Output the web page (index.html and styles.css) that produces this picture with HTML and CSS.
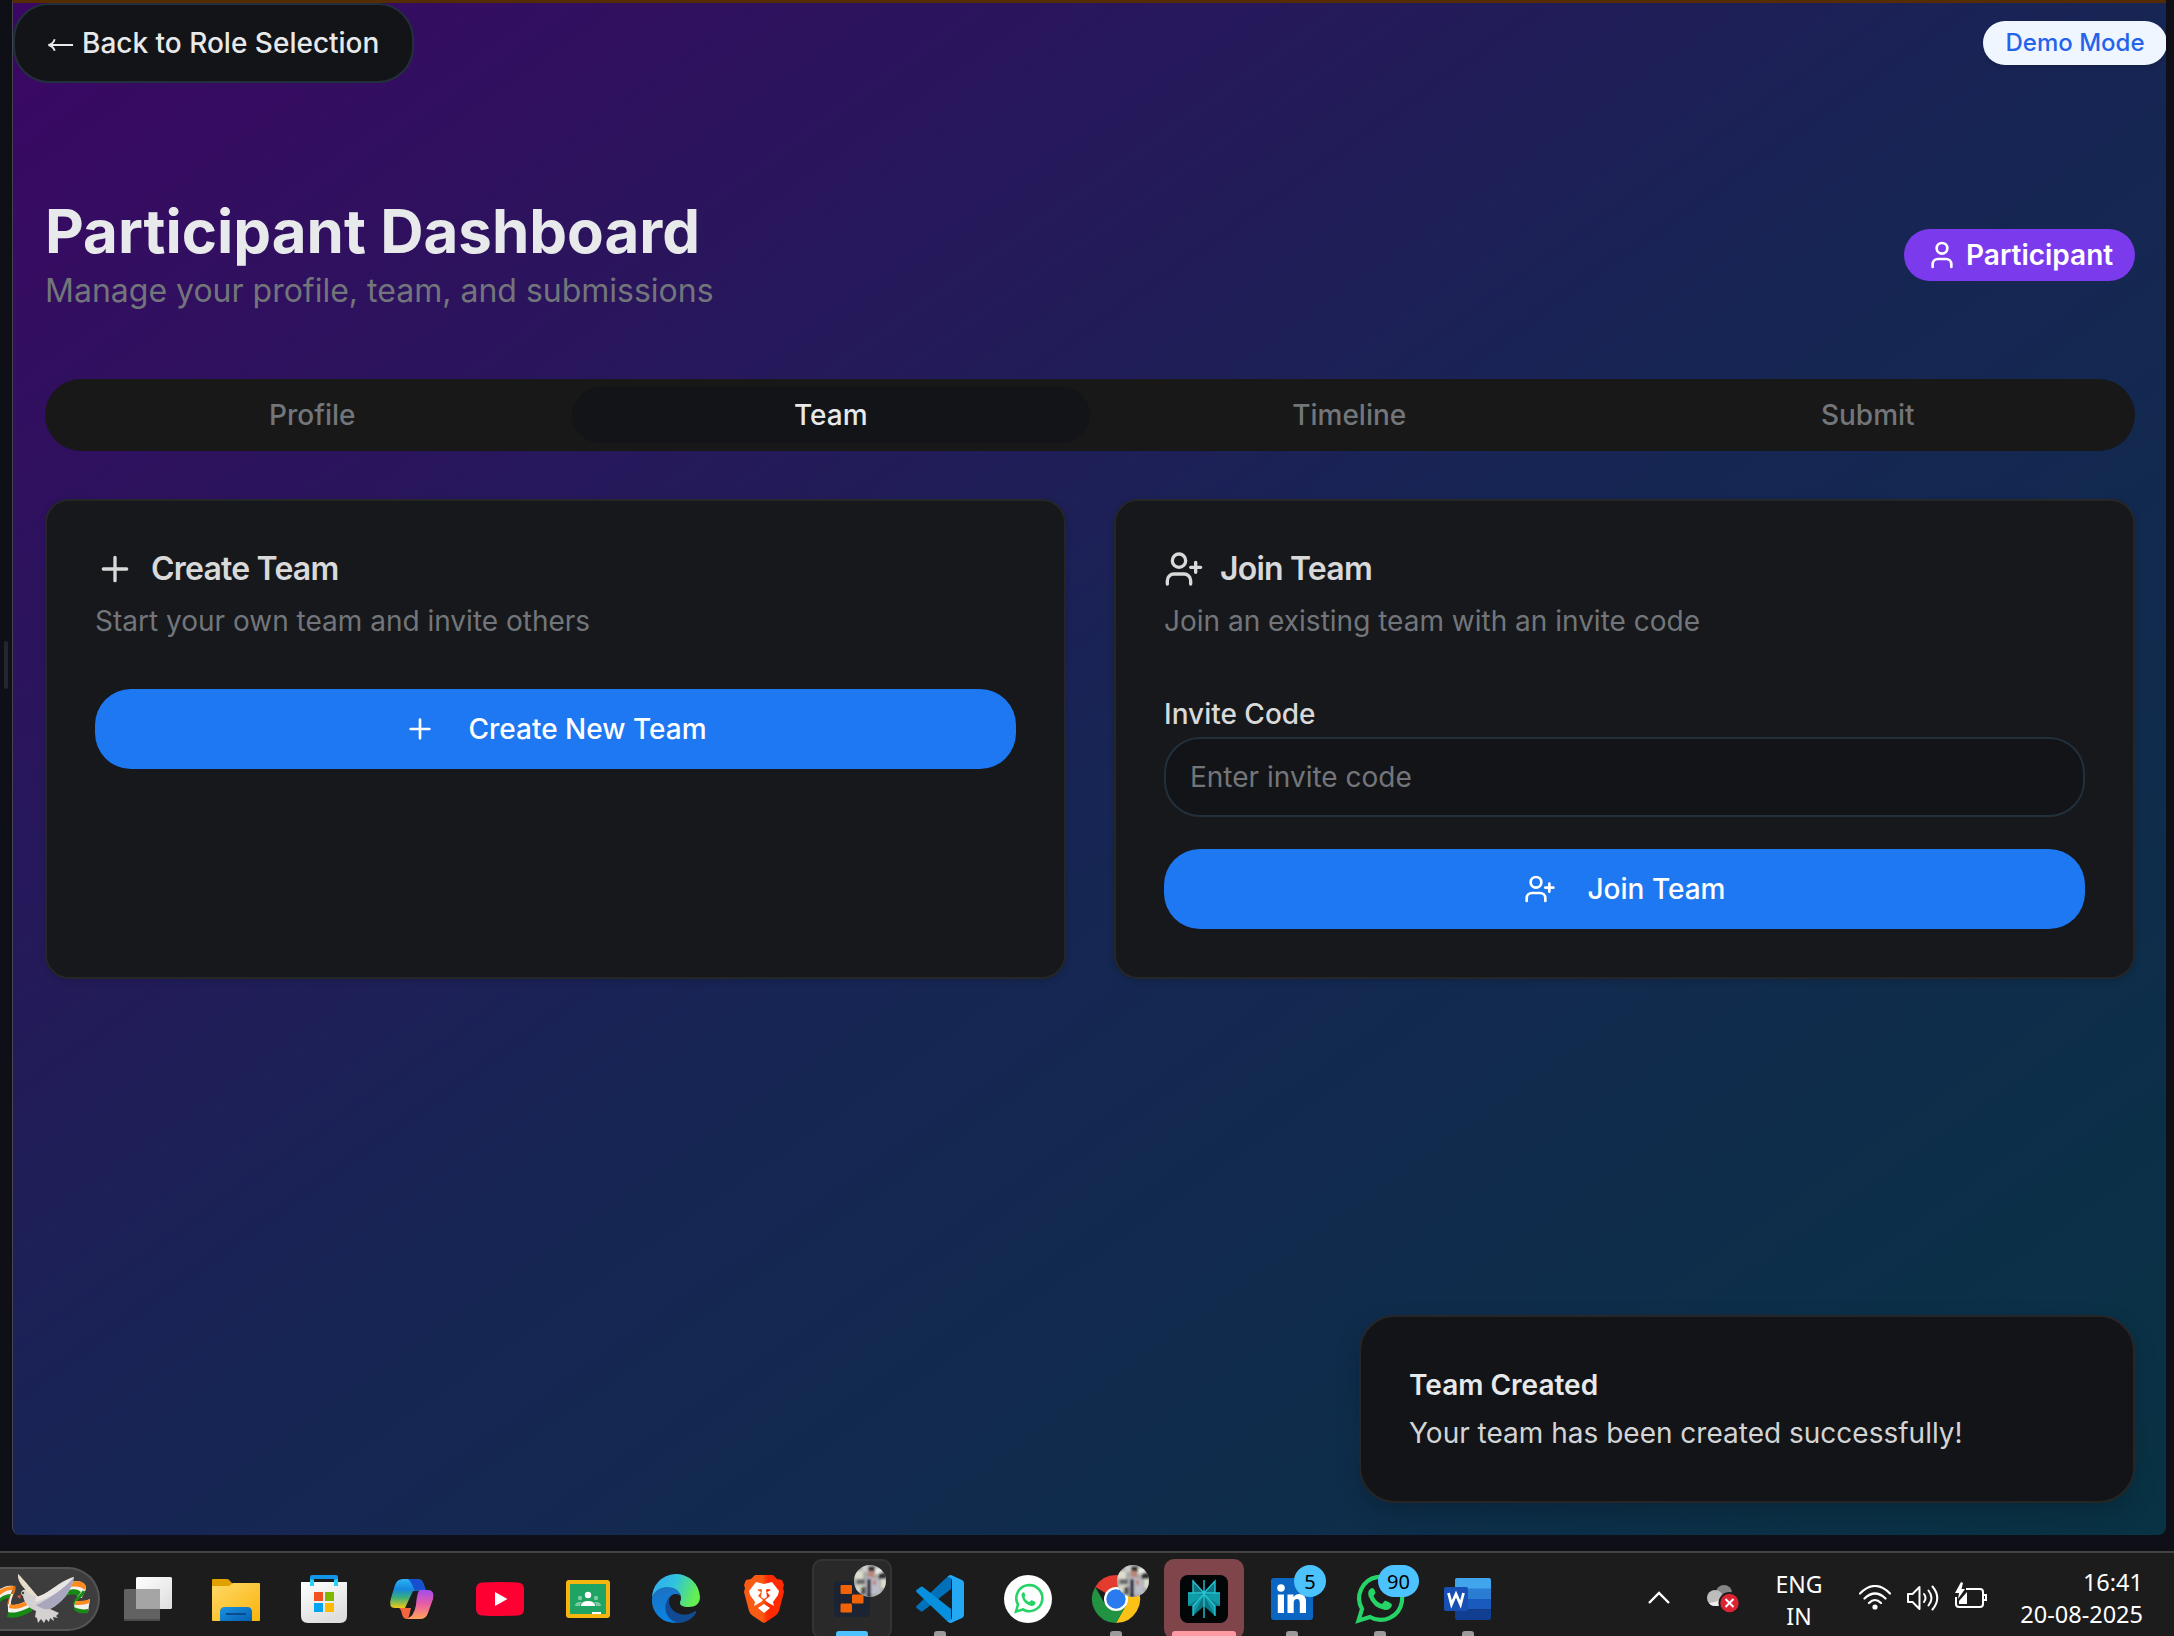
FILE: index.html
```html
<!DOCTYPE html>
<html lang="en">
<head>
<meta charset="utf-8">
<title>Participant Dashboard</title>
<link rel="stylesheet" href="styles.css">
</head>
<body>
<svg class="defs" width="0" height="0" aria-hidden="true">
  <defs>
    <symbol id="user-plus" viewBox="0 0 24 24"><path d="M16 21v-2a4 4 0 0 0-4-4H6a4 4 0 0 0-4 4v2"/><circle cx="9" cy="7" r="4"/><path d="M19 8v6M22 11h-6"/></symbol>
    <symbol id="plus" viewBox="0 0 24 24"><path d="M5 12h14M12 5v14"/></symbol>
    <symbol id="user" viewBox="0 0 24 24"><path d="M19 21v-2a4 4 0 0 0-4-4H9a4 4 0 0 0-4 4v2"/><circle cx="12" cy="7" r="4"/></symbol>
    <clipPath id="round"><circle cx="16" cy="16" r="16"/></clipPath>
    <filter id="soft"><feGaussianBlur stdDeviation="0.9"/></filter>
    <symbol id="avatar" viewBox="0 0 32 32">
      <g clip-path="url(#round)">
        <rect width="32" height="32" fill="#a9aaa5"/>
        <g filter="url(#soft)">
          <path d="M0 6h9v8H0z" fill="#dddccf"/><path d="M3 14h8v5H3z" fill="#6a6c6c"/><path d="M1 20h9v7H1z" fill="#d6d5c5"/>
          <path d="M8 0h6v7H8z" fill="#ccc"/><path d="M14 2h7v5h-7z" fill="#332b2c"/><path d="M14 6h6v7h-6z" fill="#b98678"/>
          <path d="M21 3h7v6h-7z" fill="#e8e8e4"/><path d="M25 8h7v6h-7z" fill="#2f3036"/><path d="M27 14h5v9h-5z" fill="#dcdccf"/>
          <path d="M11 13l6-1 8 3 2 14H12z" fill="#bcbcc9"/><path d="M13 14h4v18h-4z" fill="#2c2e3c"/><path d="M19 15h3v5h-3z" fill="#bf8377"/><path d="M7 22h5v7H7z" fill="#555"/>
        </g>
      </g>
    </symbol>
  </defs>
</svg>

<div class="screen">
  <div class="viewport">
    <div class="grip"></div>
    <main class="app">
      <button class="back"><svg class="arrow" viewBox="0 0 28 16"><path d="M27 8H2M8 2C7 5 4 7.500 1.500 8 4 8.500 7 11 8 14"/></svg><span class="back-text">Back to Role Selection</span></button>
      <span class="demo">Demo Mode</span>

      <header class="head">
        <div>
          <h1 class="title">Participant Dashboard</h1>
          <p class="subtitle">Manage your profile, team, and submissions</p>
        </div>
        <span class="role"><svg class="icon icon-md"><use href="#user"/></svg><span class="role-text">Participant</span></span>
      </header>

      <nav class="tabs">
        <span class="tab">Profile</span>
        <span class="tab active">Team</span>
        <span class="tab">Timeline</span>
        <span class="tab">Submit</span>
      </nav>

      <section class="cards">
        <article class="card">
          <h2 class="card-title"><svg class="icon icon-lg"><use href="#plus"/></svg><span class="card-name">Create Team</span></h2>
          <p class="card-desc">Start your own team and invite others</p>
          <button class="primary"><svg class="icon icon-md"><use href="#plus"/></svg><span>Create New Team</span></button>
        </article>
        <article class="card">
          <h2 class="card-title"><svg class="icon icon-lg"><use href="#user-plus"/></svg><span class="card-name">Join Team</span></h2>
          <p class="card-desc">Join an existing team with an invite code</p>
          <label class="label" for="code">Invite Code</label>
          <input class="input" id="code" type="text" placeholder="Enter invite code">
          <button class="primary"><svg class="icon icon-md"><use href="#user-plus"/></svg><span>Join Team</span></button>
        </article>
      </section>

      <aside class="toast">
        <p class="toast-title">Team Created</p>
        <p class="toast-text">Your team has been created successfully!</p>
      </aside>
    </main>
  </div>

  <footer class="taskbar">
    <div class="search">
      <svg class="dove" width="100" height="64" viewBox="0 0 100 64">
        <path d="M0 22c5-3 9-4 14-3l-4 10c-4-1-6 1-10 5z" fill="#f2f2ee"/>
        <path d="M0 23c5-3 9-4 14-4l-1 4c-5 0-8 1-13 5z" fill="#ff8a1f"/><path d="M0 31c4-3 7-4 11-4l-1 4c-4 0-6 1-10 4z" fill="#178a14"/>
        <path d="M14 19c3 7-8 13-5 21" fill="none" stroke="#d9721a" stroke-width="2.500"/><path d="M12 27c-1 5-3 7-2 12" fill="none" stroke="#eee" stroke-width="2"/>
        <path d="M8 37c6 3 14-1 22-5l2 11c-8 5-16 8-24 6z" fill="#f2f2ee"/>
        <path d="M10 37c6 2 13-1 20-5l1 4c-8 5-15 7-22 5z" fill="#ff8a1f"/><path d="M8 45c8 2 16-2 24-6v5c-8 5-17 8-25 6z" fill="#178a14"/>
        <path d="M68 16c8-3 16-2 18 4 0 5-3 6-4 11l-5-1 2-6c-3-2-8-1-13 1z" fill="#f2f2ee"/>
        <path d="M69 16c8-3 16-2 17 4l-1 3c-4-4-10-4-17-3z" fill="#ff8a1f"/><path d="M67 24c6-3 11-2 14 1l-3 4c-3-2-7-2-12 0z" fill="#178a14"/>
        <path d="M84 24c-2 6-11 8-9 15" fill="none" stroke="#178a14" stroke-width="3"/>
        <path d="M75 35c5 0 10 0 15-3l-2 13c-5 2-11 1-14-4z" fill="#f2f2ee"/><path d="M75 34c5 0 10 0 15-2l-1 4c-5 2-10 2-14 2z" fill="#ff8a1f"/><path d="M74 40c4 2 10 3 14 2v4c-5 1-12 0-14-4z" fill="#178a14"/>
        <path d="M18 7c6 6 16 18 20 23 10-2 20-16 36-20-2 14-13 27-24 32l9 4-3 3 2 2-5-1 1 4-4-3-1 4-3-3-2 4-3-4-3 4-1-5-2-1 1-6c-6-2-12-8-13-15l-2-2c0-4 3-5 5-4-4-6-8-10-8-16z" fill="#d5d1d2"/>
        <path d="M18 7c6 6 16 18 20 23l-7-2c-5-5-14-12-13-21z" fill="#e7dcc9"/>
        <path d="M74 10c-2 14-13 27-24 32-5 1-10-1-14-4 12-5 26-15 38-28z" fill="#a9a7bd"/>
        <path d="M36 30c10-2 22-14 38-20-8 10-24 22-39 25z" fill="#e9e5e3"/>
        <circle cx="23" cy="26" r="1.200" fill="#442"/><path d="M17 29l4-1-1 4z" fill="#e2543c"/>
      </svg>
    </div>
    <div class="dock">
      <div class="slot"><svg class="app-icon" viewBox="0 0 48 48">
        <defs><linearGradient id="tv" x2="1" y2="1"><stop stop-color="#fff"/><stop offset="1" stop-color="#ddd"/></linearGradient></defs>
        <rect x="12" y="2" width="36" height="32" rx="1.500" fill="url(#tv)"/><rect y="14" width="36" height="32" rx="1.500" fill="#626262"/><path d="M12 14h24v20H12z" fill="#a5a5a5"/><path d="M0 44h36v1q0 1-1 1H1q-1 0-1-1z" fill="#4c4c4c"/></svg></div>
      <div class="slot"><svg class="app-icon" viewBox="0 0 48 48">
        <defs><linearGradient id="fo" x2="1" y2="1"><stop stop-color="#ffd869"/><stop offset="1" stop-color="#f9b50b"/></linearGradient><linearGradient id="fb" x2="1" y2="1"><stop stop-color="#1a94e2"/><stop offset="1" stop-color="#0560b0"/></linearGradient></defs>
        <path d="M0 12V5q0-1 1-1h14q2 0 3 2l3 3v4z" fill="#e0a100"/><path d="M0 11h17l4-3h26q1 0 1 1v36q0 1-1 1H1q-1 0-1-1z" fill="url(#fo)"/><path d="M8 46V37q0-5 5-5h22q5 0 5 5v9z" fill="url(#fb)"/><path d="M14 39h20" stroke="#0a4b8c" stroke-width="2"/></svg></div>
      <div class="slot"><svg class="app-icon" viewBox="0 0 48 48">
        <defs><linearGradient id="st" x2=".5" y2="1"><stop stop-color="#fff"/><stop offset="1" stop-color="#dedede"/></linearGradient></defs>
        <path d="M1 7h46v34q0 7-7 7H8q-7 0-7-7z" fill="url(#st)"/><path d="M12 11V2h24v9" fill="none" stroke="#1195e8" stroke-width="4" stroke-linejoin="round"/><path d="M10 4v7h4V5zM38 4v7h-4V5z" fill="#2bd0f5"/>
        <path d="M14 17h9v9h-9z" fill="#f25022"/><path d="M25 17h9v9h-9z" fill="#7fba00"/><path d="M14 28h9v9h-9z" fill="#00a4ef"/><path d="M25 28h9v9h-9z" fill="#ffb900"/></svg></div>
      <div class="slot"><svg class="app-icon" viewBox="0 0 48 48">
        <defs><linearGradient id="c1" x2="0" y2="1"><stop stop-color="#2ab4f5"/><stop offset=".35" stop-color="#1488de"/><stop offset=".65" stop-color="#3dae78"/><stop offset="1" stop-color="#f2cb17"/></linearGradient><linearGradient id="c2" x2="0" y2="1"><stop stop-color="#a34cf0"/><stop offset=".5" stop-color="#e95fa0"/><stop offset="1" stop-color="#ffa45b"/></linearGradient></defs>
        <path d="M20 4h10q4 0 6 6l1 5h4l-16 1-8 17H7q-7 0-4-10l4-13q2-6 8-6z" fill="url(#c1)"/><path d="M20 4h10q4 0 6 6l2 5q-8-1-11 1-4-10-7-12z" fill="#174fd0"/>
        <path d="M32 15h8q7 0 5 9l-5 14q-2 6-8 6H18q8-2 10-14 1-14 4-15z" fill="url(#c2)"/><path d="M11 33h12l-1 4q-1 6-3 7-4 0-5-5-1-5-3-6z" fill="#f4663f"/></svg></div>
      <div class="slot"><svg class="app-icon" viewBox="0 0 48 48"><path d="M6 7.500Q24 6.500 42 7.500q5.500.5 6 6v21q-.5 5.500-6 6-18 1-36 0-5.500-.5-6-6v-21q.5-5.500 6-6z" fill="#ff0033"/><path d="M19 17v14l12.500-7z" fill="#fff"/></svg></div>
      <div class="slot"><svg class="app-icon" viewBox="0 0 48 48"><rect x="2" y="5" width="44" height="38" rx="3" fill="#f7b50f"/><path d="M6 9h36v30H6z" fill="#1fa463"/><g fill="#fff"><circle cx="24" cy="20" r="3.200"/><path d="M17 31v-1q1-4 7-4t7 4v1z"/><path d="M28 37h9v2h-9z"/></g><g fill="#7dcca3"><circle cx="16" cy="23" r="2.200"/><circle cx="32" cy="23" r="2.200"/><path d="M11 31q0-4 5-4l2 0q-2 1-2 4zM37 31q0-4-5-4l-2 0q2 1 2 4z"/></g></svg></div>
      <div class="slot"><svg class="app-icon" viewBox="0 0 48 48">
        <defs><linearGradient id="e1" x2="1" y2=".3"><stop stop-color="#32a9f2"/><stop offset=".5" stop-color="#2fc2df"/><stop offset="1" stop-color="#63ee53"/></linearGradient><linearGradient id="e2" x2=".3" y2="1"><stop stop-color="#1d6fbf"/><stop offset="1" stop-color="#0a84e4"/></linearGradient></defs>
        <path d="M0 24A24 24 0 0 1 48 22c0 7-5 10-11 10-7 0-9-2-9-4s1-2 1-5c0-5-4-10-13-10C7 13 1 18 0 24z" fill="url(#e1)"/>
        <path d="M0 24c1-7 7-12 15-12 8 0 13 4 14 10-1-4-10-5-13 3-4 10 2 19 13 22C13 51-1 39 0 24z" fill="url(#e2)"/>
        <path d="M19 21c-4 4-2 15 9 18 7 2 12-1 15-3q2 0 1 2c-5 8-13 10-18 10C13 45 9 29 19 21z" fill="#104b94"/></svg></div>
      <div class="slot"><svg class="app-icon" viewBox="0 0 48 48">
        <defs><linearGradient id="br"><stop offset=".45" stop-color="#fb5a12"/><stop offset=".6" stop-color="#ff2a00"/></linearGradient></defs>
        <path d="M15 0h18l4 4 5 1 2 5-1 3 1 4-5 19q-1 3-4 5l-9 6-2 1-2-1-9-6q-3-2-4-5L4 17l1-4-1-3 2-5 5-1z" fill="url(#br)"/>
        <path d="M16 7l8 2 8-2 7 9-1 4-5 7 1 4-7-4-2-2 5-4-3-4 4-2q-4-2-5 0l1 7-3 2-3-2 1-7q-1-2-5 0l4 2-3 4 5 4-2 2-7 4 1-4-5-7-1-4z" fill="#fff"/><path d="M18 33l6-4 6 4-6 5z" fill="#fff"/></svg></div>
      <div class="slot open focused"><svg class="app-icon" viewBox="0 0 48 48"><rect x="6" y="6" width="36" height="36" rx="4" fill="#1c2333"/><g fill="#f26207"><rect x="12.500" y="10" width="11.500" height="9" rx="1.200"/><rect x="24" y="19.500" width="11.500" height="9" rx="1.200"/><rect x="12.500" y="28.500" width="11.500" height="9" rx="1.200"/></g></svg><svg class="face"><use href="#avatar"/></svg></div>
      <div class="slot open"><svg class="app-icon" viewBox="0 0 48 48">
        <path d="M35 0v14L7 36q-1 1-2.500 0L.5 33q-1-1 0-2L30 3z" fill="#0071b8"/><path d="M35 48V34L7 12q-1-1-2.500 0L.5 15q-1 1 0 2L31 46z" fill="#0690dd"/><path d="M35 0l11 5q2 1 2 3v32q0 2-2 3l-11 5q-2 0-4-2 5 0 5-4V6q0-4-5-4 2-2 4-2z" fill="#24a8f3"/></svg></div>
      <div class="slot"><svg class="app-icon" viewBox="0 0 48 48"><circle cx="24" cy="24" r="24" fill="#fff"/><path d="M12 36.500l2-7a13 13 0 1 1 5 5z" fill="none" stroke="#25d366" stroke-width="2.600"/><path d="M20 17q-3 1-2.500 4 2 8 10 10 4 0 4-4l-4-2-2 2q-4-1.500-5-5l1-1.500z" fill="#25d366"/></svg></div>
      <div class="slot open"><svg class="app-icon" viewBox="0 0 48 48"><path d="M24 24L3.200 12A24 24 0 0 1 44.800 12z" fill="#e33b2e"/><path d="M24 12h20.800A24 24 0 0 1 24 48l10-18z" fill="#fbc116"/><path d="M3.200 12A24 24 0 0 0 24 48l10.400-18L24 24l-10.400 6z" fill="#229342"/><circle cx="24" cy="24" r="12" fill="#fff"/><circle cx="24" cy="24" r="9.700" fill="#2b7bf0"/></svg><svg class="face face-chrome"><use href="#avatar"/></svg></div>
      <div class="slot open alert"><svg class="app-icon" viewBox="0 0 48 48"><rect width="48" height="48" rx="8" fill="#030607"/><path d="M24 18L13 6v12H8v13h5v10l11-10 11 10V31h5V18h-5V6z" fill="#0d7480"/><path d="M24 20L8 31V18zM24 20l16 11V18zM24 20L13 41V31zM24 20l11 21V31z" fill="#119aa8"/><path d="M24 5v38M13 5v13l0-12 11 12L35 6v12M8 18h32M24 19L13 31v10M24 19l11 12v10" fill="none" stroke="#24c4d3" stroke-width="1.400"/></svg></div>
      <div class="slot open"><svg class="app-icon" viewBox="0 0 48 48"><rect x="3" y="3" width="42" height="42" rx="3" fill="#0a66c2"/><g fill="#fff"><circle cx="13" cy="13" r="3.800"/><path d="M9.800 19.500h6.200V38H9.800zM19.500 19.500h6v2.700q2-3.200 6-3.200 6.500 0 6.500 8v11h-6.200V28q0-4-2.800-4-3.300 0-3.300 4v10h-6.200z"/></g></svg><span class="badge">5</span></div>
      <div class="slot open"><svg class="app-icon" viewBox="0 0 48 48"><path d="M2.500 45.500l3.500-11.500a21.500 21.500 0 1 1 8 8z" fill="none" stroke="#25d366" stroke-width="4.200"/><path d="M16 13q-5 2-3.500 8Q17 33 29 35q6 0 7-5 0-2-7-4.500l-3 3.500q-6-2-8.500-8l2-3q-1-5-3.500-5z" fill="#25d366"/></svg><span class="badge wide">90</span></div>
      <div class="slot open"><svg class="app-icon" viewBox="0 0 48 48"><path d="M11 5q0-2 2-2h32q2 0 2 2v9H11z" fill="#41a5ee"/><path d="M11 13.500h36V24H11z" fill="#2b7cd3"/><path d="M11 24h36v10.500H11z" fill="#185abd"/><path d="M11 34.500h36V43q0 2-2 2H13q-2 0-2-2z" fill="#103f91"/><rect y="12" width="24" height="24" rx="2" fill="#174fb5"/><path d="M4.500 18l3 11.500L12 19l4.500 10.500 3-11.500" fill="none" stroke="#fff" stroke-width="2.800"/></svg></div>
    </div>
    <div class="tray">
      <svg class="caret" viewBox="0 0 22 14"><path d="M1 13L11 3l10 10"/></svg>
      <svg class="cloud" viewBox="0 0 32 30"><circle cx="17" cy="9" r="8" fill="#858585"/><circle cx="8" cy="14" r="8" fill="#bdbdbd"/><path d="M2 19q10-1 14-6v9H8q-4 0-6-3z" fill="#eee"/><circle cx="22.500" cy="19" r="11" fill="#1c1c1c"/><circle cx="22.500" cy="19" r="9.200" fill="#dc2331"/><path d="M18.500 15l8 8M26.500 15l-8 8" stroke="#fff" stroke-width="2"/></svg>
      <div class="lang"><span>ENG</span><span>IN</span></div>
      <svg class="wifi" viewBox="0 0 32 26"><path d="M1 8.500q15-15 30 0M5.500 13.500q10.500-10 21 0M10 18q6-6 12 0"/><circle cx="16" cy="22" r="2.600"/></svg>
      <svg class="sound" viewBox="0 0 34 28"><path d="M2 10h4.500l7-7v22l-7-7H2zM18 10q3 4 0 8M22.500 6.500q6 7.500 0 15M26.500 2.500q9.500 11.500 0 23"/></svg>
      <svg class="battery" viewBox="0 0 34 28"><path d="M12 7h14q3 0 3 3v12q0 3-3 3H5q-3 0-3-3v-7M29 13h3v5h-3"/><path class="fill" d="M7 0L1 11h4l-1 6 7-10H7.500L9 1zM5 22v-3l8-9v12z"/></svg>
      <div class="clock"><span>16:41</span><span>20-08-2025</span></div>
    </div>
  </footer>
</div>
</body>
</html>
```
FILE: styles.css
```css
* { box-sizing: border-box; margin: 0; padding: 0; }
body { font-family: Inter, "Liberation Sans", sans-serif; color: #e7e9ea; background: #0f0f17; }
button, input { font: inherit; color: inherit; }
.defs { position: absolute; }
.screen { width: 2174px; height: 1636px; display: flex; flex-direction: column; overflow: hidden; }
.viewport { height: 1551px; display: flex; padding: 0 8px 16px 0; }
.grip { width: 4px; height: 48px; margin: 641px 4px 0 4px; border-radius: 2px; background: #262631; }

.app {
  position: relative; flex: 1; overflow: hidden; padding: 192px 31px 0 32px; margin-left: 0;
  border-top: 3px solid #552b00; border-left: 1px solid #45454f; border-radius: 0 0 8px 8px;
  background: linear-gradient(to bottom right, #3b0764, #172554, #083344);
}
.icon { fill: none; stroke: currentColor; stroke-width: 2; stroke-linecap: round; stroke-linejoin: round; flex: none; }
.icon-md { width: 32px; height: 32px; }
.icon-lg { width: 40px; height: 40px; }

.back {
  position: absolute; left: 0; top: 0; height: 80px; width: 401px; padding: 0 32px; display: flex; align-items: center; gap: 8px;
  background: #131417; border: 2px solid #22303c; border-radius: 36px; font-size: 28px; font-weight: 500; white-space: nowrap;
}
.arrow { width: 27px; height: 16px; margin-top: 4px; fill: none; stroke: currentColor; stroke-width: 2; flex: none; }
.demo {
  position: absolute; right: -1px; top: 18px; height: 44px; width: 184px; padding-bottom: 1px; border-radius: 22px; background: #eff6ff; color: #2563eb;
  display: flex; align-items: center; justify-content: center; font-size: 24px; font-weight: 500; box-shadow: 0 2px 4px rgba(0,0,0,.15);
}

.head { display: flex; justify-content: space-between; align-items: center; height: 120px; }
.title { font-size: 60px; line-height: 72px; font-weight: 700; }
.subtitle { font-size: 32px; line-height: 48px; color: #72767a; }
.role {
  display: flex; align-items: center; gap: 8px; height: 52px; width: 231px; padding-left: 22px; border-radius: 26px;
  background: #7c3aed; color: #fff; font-size: 28px; font-weight: 600;
}

.tabs { display: grid; grid-template-columns: repeat(4, 1fr); height: 72px; margin-top: 64px; padding: 8px; border-radius: 36px; background: #181818; }
.tab { display: flex; align-items: center; justify-content: center; border-radius: 32px; font-size: 28px; font-weight: 500; color: #72767a; }
.tab.active { background: #131417; color: #e7e9ea; }

.cards { display: grid; grid-template-columns: 1fr 1fr; gap: 48px; margin-top: 48px; }
.card { height: 480px; padding: 48px; border: 2px solid #242628; border-radius: 24px; background: #17181c; box-shadow: 0 2px 6px rgba(0,0,0,.15); }
.card-title { display: flex; align-items: center; gap: 16px; height: 40px; font-size: 32px; font-weight: 600; letter-spacing: -.025em; color: #d9d9d9; }
.card-name { padding-bottom: 2px; }
.card-desc { margin: 12px 0 48px; font-size: 28px; line-height: 40px; color: #72767a; }
.primary {
  display: flex; align-items: center; justify-content: center; gap: 32px; width: 100%; height: 80px; border: 0; border-radius: 36px;
  background: #1e78f2; color: #fff; font-size: 28px; font-weight: 500;
}
.label { display: block; height: 48px; line-height: 50px; font-size: 28px; font-weight: 500; color: #d9d9d9; }
.input { display: block; width: 100%; height: 80px; margin-bottom: 32px; padding: 0 24px; border: 2px solid #22303c; border-radius: 36px; background: #131417; font-size: 28px; }
.input::placeholder { color: #72767a; opacity: 1; }

.toast {
  position: absolute; right: 31px; bottom: 32px; width: 776px; height: 188px; padding: 48px; display: flex; flex-direction: column; gap: 8px;
  border: 2px solid #262626; border-radius: 36px; background: #131417; box-shadow: 0 10px 24px rgba(0,0,0,.18); font-size: 28px; line-height: 40px;
}
.toast-title { font-weight: 600; }
.toast-text { color: #d2d4d5; }

.taskbar { height: 85px; display: flex; border-top: 2px solid #434343; background: #1c1c1c; font-family: "Noto Sans", sans-serif; }
.search { width: 100px; height: 64px; margin: 14px 8px 0 0; border: 2px solid #545454; border-left: 0; border-radius: 0 32px 32px 0; background: #3d3d3d; }
.dove { display: block; margin-top: -2px; }
.dock { display: flex; gap: 8px; padding-top: 6px; }
.slot { position: relative; width: 80px; height: 80px; padding: 16px; border-radius: 10px; }
.app-icon { display: block; width: 48px; height: 48px; overflow: visible; }
.slot.open::after { content: ""; position: absolute; left: 34px; top: 72px; width: 12px; height: 8px; border-radius: 3px; background: #9a9a9a; }
.slot.focused { background: #292929; box-shadow: inset 0 0 0 2px #333; }
.slot.focused::after { left: 24px; width: 32px; background: #4cc2ff; }
.slot.alert { background: #80444b; }
.slot.alert::after { left: 8px; width: 64px; background: #ff99a4; }
.face { position: absolute; left: 42px; top: 6px; width: 32px; height: 32px; }
.face-chrome { left: 41px; }
.badge {
  position: absolute; left: 42px; top: 6px; width: 32px; height: 32px; border-radius: 16px; background: #4cc2ff; color: #000;
  display: flex; align-items: center; justify-content: center; font-size: 20px;
}
.badge.wide { left: 38px; width: 41px; }

.tray { flex: 1; display: flex; align-items: center; color: #fff; font-size: 23px; line-height: 32px; padding-left: 140px; }
.tray svg { flex: none; }
.caret { width: 22px; height: 14px; fill: none; stroke: #fff; stroke-width: 2.4; margin-top: 4px; }
.cloud { width: 32px; height: 30px; margin: 8px 0 0 37px; }
.lang { width: 48px; margin: 10px 0 0 36px; display: flex; flex-direction: column; align-items: center; }
.wifi { width: 32px; height: 26px; margin: 6px 0 0 36px; fill: none; stroke: #fff; stroke-width: 2.2; stroke-linecap: round; }
.wifi circle { fill: #fff; stroke: none; }
.sound { width: 34px; height: 28px; margin: 7px 0 0 15px; fill: none; stroke: #fff; stroke-width: 2; stroke-linecap: round; stroke-linejoin: round; }
.battery { width: 34px; height: 28px; margin: 2px 0 0 14px; fill: none; stroke: #fff; stroke-width: 2; }
.battery .fill { fill: #fff; stroke: none; }
.clock { flex: 1; margin: 6px 31px 0 0; display: flex; flex-direction: column; align-items: flex-end; white-space: nowrap; font-size: 23.5px; }
```
